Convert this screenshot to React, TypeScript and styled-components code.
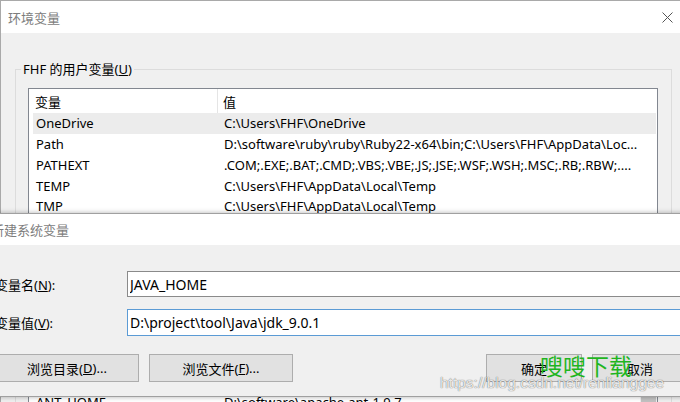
import styled, { createGlobalStyle } from "styled-components";

const GlobalStyle = createGlobalStyle`
  html, body {
    margin: 0;
    padding: 0;
    background: #ffffff;
  }
  body {
    font-family: "Noto Sans", "Noto Sans CJK SC", sans-serif;
    font-size: 13px;
    color: #000;
  }
`;

type Variable = {
  name: string;
  value: string;
};

const userVars: Variable[] = [
  { name: "OneDrive", value: "C:\\Users\\FHF\\OneDrive" },
  {
    name: "Path",
    value: "D:\\software\\ruby\\ruby\\Ruby22-x64\\bin;C:\\Users\\FHF\\AppData\\Loc...",
  },
  {
    name: "PATHEXT",
    value: ".COM;.EXE;.BAT;.CMD;.VBS;.VBE;.JS;.JSE;.WSF;.WSH;.MSC;.RB;.RBW;....",
  },
  { name: "TEMP", value: "C:\\Users\\FHF\\AppData\\Local\\Temp" },
  { name: "TMP", value: "C:\\Users\\FHF\\AppData\\Local\\Temp" },
];

const systemVars: Variable[] = [{ name: "ANT_HOME", value: "D:\\software\\apache-ant-1.9.7" }];

function CloseIcon() {
  return (
    <svg width="11" height="11" viewBox="0 0 11 11">
      <path d="M0.5 0.5 L10.5 10.5 M10.5 0.5 L0.5 10.5" stroke="#555" strokeWidth="1" fill="none" />
    </svg>
  );
}

export default function App() {
  return (
    <>
      <GlobalStyle />
      <Page>
        <Window>
          <TitleBar>
            <Title>环境变量</Title>
            <CloseIcon />
          </TitleBar>
          <WindowBody>
            <GroupBox>
              <Legend>
                FHF 的用户变量(<u>U</u>)
              </Legend>
              <ListView $height={236}>
                <ListHeader>
                  <HeaderCell $divider>变量</HeaderCell>
                  <HeaderCell>值</HeaderCell>
                </ListHeader>
                <ListRows>
                  {userVars.map((v, i) => (
                    <ListRow key={v.name} $selected={i === 0}>
                      <span>{v.name}</span>
                      <span>{v.value}</span>
                    </ListRow>
                  ))}
                </ListRows>
              </ListView>
            </GroupBox>
            {/* system variables: only its first row peeks out below the dialog */}
            <SystemGroup>
              <ListView $height={120}>
                <ListHeader>
                  <HeaderCell $divider />
                  <HeaderCell />
                </ListHeader>
                <ScrollArea>
                  <ListRows>
                    {systemVars.map((v) => (
                      <ListRow key={v.name}>
                        <span>{v.name}</span>
                        <span>{v.value}</span>
                      </ListRow>
                    ))}
                  </ListRows>
                  <ScrollTrack>
                    <ScrollThumb />
                  </ScrollTrack>
                </ScrollArea>
              </ListView>
            </SystemGroup>
          </WindowBody>
        </Window>

        <Dialog>
          <DialogTitleBar>
            <Title>新建系统变量</Title>
          </DialogTitleBar>
          <DialogBody>
            <FieldRow>
              <FieldLabel>
                变量名(<u>N</u>):
              </FieldLabel>
              <TextInput readOnly value="JAVA_HOME" />
            </FieldRow>
            <FieldRow>
              <FieldLabel>
                变量值(<u>V</u>):
              </FieldLabel>
              <TextInput readOnly $focused value="D:\project\tool\Java\jdk_9.0.1" />
            </FieldRow>
            <Actions>
              <ButtonGroup>
                <Button $width={144}>
                  浏览目录(<u>D</u>)...
                </Button>
                <Button $width={144}>
                  浏览文件(<u>F</u>)...
                </Button>
              </ButtonGroup>
              <ButtonGroup>
                <Button $width={96}>确定</Button>
                <Button $width={96}>取消</Button>
              </ButtonGroup>
            </Actions>
          </DialogBody>
        </Dialog>

        <WatermarkTitle>嗖嗖下载</WatermarkTitle>
        <WatermarkUrl>https://blog.csdn.net/renlianggee</WatermarkUrl>
      </Page>
    </>
  );
}

const Page = styled.div`
  position: relative;
  width: 680px;
  height: 402px;
  overflow: hidden;
`;

const Window = styled.div`
  width: 680px;
  box-sizing: border-box;
  border-top: 1px solid #a9a9a9;
  border-left: 1px solid #a9a9a9;
  background: #f0f0f0;
`;

const TitleBar = styled.div`
  height: 32px;
  background: #fff;
  display: flex;
  align-items: center;
  justify-content: space-between;
  padding: 0 7px 0 7px;
`;

const Title = styled.span`
  color: #7d7d7d;
  font-size: 13px;
`;

const WindowBody = styled.div`
  padding: 27px 8px 0 14px;
  display: flex;
  flex-direction: column;
  gap: 10px;
`;

const GroupBox = styled.fieldset`
  margin: 0;
  padding: 10px 13px 10px 12px;
  border: 1px solid #dcdcdc;
  min-width: 0;
`;

const SystemGroup = styled(GroupBox)`
  padding-top: 21px;
`;

const Legend = styled.legend`
  margin-left: -7px;
  padding: 0 2px;
  font-size: 13px;
  line-height: 18px;
`;

const ListView = styled.div<{ $height: number }>`
  height: ${(p) => p.$height}px;
  box-sizing: border-box;
  border: 1px solid #828790;
  background: #fff;
  display: flex;
  flex-direction: column;
  overflow: hidden;
`;

const ListHeader = styled.div`
  height: 24px;
  flex: none;
  display: grid;
  grid-template-columns: 189px 1fr;
  align-items: center;
`;

const HeaderCell = styled.div<{ $divider?: boolean }>`
  height: 100%;
  display: flex;
  align-items: center;
  padding-left: ${(p) => (p.$divider ? 6 : 5)}px;
  border-right: ${(p) => (p.$divider ? "1px solid #e5e5e5" : "none")};
`;

const ListRows = styled.div`
  flex: 1;
  padding: 0 1px 0 4px;
  min-width: 0;
`;

const ListRow = styled.div<{ $selected?: boolean }>`
  height: 20.75px;
  display: grid;
  grid-template-columns: 188px 1fr;
  align-items: center;
  padding-left: 3px;
  background: ${(p) => (p.$selected ? "#ececec" : "transparent")};
  white-space: nowrap;
  overflow: hidden;
`;

const ScrollArea = styled.div`
  flex: 1;
  display: flex;
`;

const ScrollTrack = styled.div`
  width: 17px;
  flex: none;
  background: #f0f0f0;
  padding: 0 1px;
  box-sizing: border-box;
`;

const ScrollThumb = styled.div`
  height: 60px;
  background: #c2c2c2;
`;

const Button = styled.button<{ $width: number }>`
  width: ${(p) => p.$width}px;
  height: 28px;
  box-sizing: border-box;
  border: 1px solid #adadad;
  background: #e1e1e1;
  font-family: "Noto Sans", "Noto Sans CJK SC", sans-serif;
  font-size: 13px;
  color: #000;
  padding: 0;
  display: flex;
  align-items: center;
  justify-content: center;
`;

const Dialog = styled.div`
  position: absolute;
  left: -18px;
  top: 213px;
  width: 720px;
  height: 184px;
  box-sizing: border-box;
  border: 1px solid #a0a0a0;
  background: #f0f0f0;
  box-shadow: 0 0 5px rgba(0, 0, 0, 0.3);
`;

const DialogTitleBar = styled.div`
  height: 31px;
  background: #fff;
  display: flex;
  align-items: center;
  padding-left: 8px;
`;

const DialogBody = styled.div`
  padding: 26px 13px 0 12px;
  display: flex;
  flex-direction: column;
  gap: 12px;
`;

const FieldRow = styled.div`
  display: flex;
  align-items: center;
`;

const FieldLabel = styled.label`
  width: 132px;
  flex: none;
  font-size: 13px;
`;

const TextInput = styled.input<{ $focused?: boolean }>`
  flex: 1;
  min-width: 0;
  height: ${(p) => (p.$focused ? 27 : 26)}px;
  box-sizing: border-box;
  border: 1px solid ${(p) => (p.$focused ? "#5b9bd5" : "#8a8a8a")};
  background: #fff;
  padding: 0 2px;
  margin: 0;
  font-family: "Noto Sans", sans-serif;
  font-size: 14px;
  color: #000;
  outline: none;
`;

const Actions = styled.div`
  display: flex;
  justify-content: space-between;
  margin-top: 6px;
`;

const ButtonGroup = styled.div`
  display: flex;
  gap: 10px;
`;

const WatermarkTitle = styled.div`
  position: absolute;
  left: 540px;
  top: 351px;
  font-family: "Noto Sans CJK SC", sans-serif;
  font-size: 23px;
  line-height: 28px;
  color: #1fb51f;
`;

const WatermarkUrl = styled.div`
  position: absolute;
  left: 440px;
  top: 374px;
  font-family: "Liberation Sans", Arial, sans-serif;
  font-size: 15.5px;
  line-height: 18px;
  color: rgba(255, 255, 255, 0.85);
  text-shadow: 0 0 1px rgba(0, 0, 0, 0.45), 0 0 1px rgba(0, 0, 0, 0.35);
`;
